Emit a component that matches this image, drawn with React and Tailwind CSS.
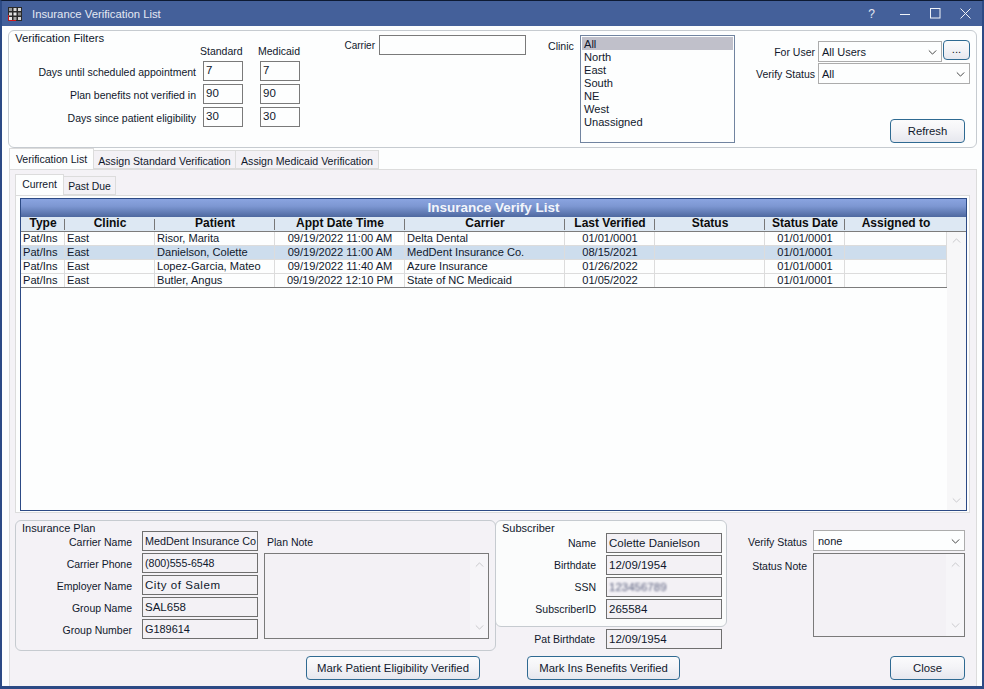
import React from "react";

const font = { fontFamily: '"Liberation Sans", Arial, sans-serif' };

function Chev({ up, color = "#2b2b2b", size = 11 }) {
  return (
    <svg width={size} height={7} viewBox="0 0 11 7" fill="none" className="shrink-0">
      <path d={up ? "M1 6 L5.5 1.5 L10 6" : "M1 1 L5.5 5.5 L10 1"} stroke={color} strokeWidth="1.1" />
    </svg>
  );
}

function NumBox({ v, className = "" }) {
  return (
    <div className={"w-[40px] h-[20px] border border-[#7a7a7a] bg-[#fdfefe] pl-[2px] leading-[16px] text-[11.5px] text-[#10182c] " + className}>{v}</div>
  );
}

function Combo({ v, className = "" }) {
  return (
    <div className={"flex items-center justify-between border border-[#acacac] bg-[#fdfefe] pl-[3px] pr-[4px] pt-px text-[11px] text-[#10182c] " + className}>
      <span>{v}</span>
      <Chev size={9} color="#333" />
    </div>
  );
}

function Btn({ children, className = "" }) {
  return (
    <div className={"flex items-center justify-center rounded-[4px] border border-[#2f6a92] bg-[linear-gradient(#fbfbfc_0%,#f4f4f7_45%,#e6e7ee_100%)] text-[#10182c] " + className}>{children}</div>
  );
}

function RO({ v, size = "text-[11.5px]", className = "" }) {
  return (
    <div className={"h-[20px] border border-[#6f6f6f] bg-[#f3f1f5] pl-[2px] pt-px leading-[16px] text-[#10182c] whitespace-nowrap overflow-hidden " + size + " " + className}>{v}</div>
  );
}

function NoteBox({ className = "" }) {
  return (
    <div className={"flex justify-end border border-[#7a7a7a] bg-[#f3f1f5] " + className}>
      <div className="w-[18px] flex flex-col items-center justify-between py-[7px] bg-[#f6f5f8]">
        <Chev up color="#c5c5c8" size={9} />
        <Chev color="#c5c5c8" size={9} />
      </div>
    </div>
  );
}

const cols = [
  ["Type", 44, "l"],
  ["Clinic", 90, "l"],
  ["Patient", 120, "l"],
  ["Appt Date Time", 130, "c"],
  ["Carrier", 160, "l"],
  ["Last Verified", 90, "c"],
  ["Status", 110, "c"],
  ["Status Date", 80, "c"],
  ["Assigned to", 102, "c"],
];

const rows = [
  ["Pat/Ins", "East", "Risor, Marita", "09/19/2022 11:00 AM", "Delta Dental", "01/01/0001", "", "01/01/0001", ""],
  ["Pat/Ins", "East", "Danielson, Colette", "09/19/2022 11:00 AM", "MedDent Insurance Co.", "08/15/2021", "", "01/01/0001", ""],
  ["Pat/Ins", "East", "Lopez-Garcia, Mateo", "09/19/2022 11:40 AM", "Azure Insurance", "01/26/2022", "", "01/01/0001", ""],
  ["Pat/Ins", "East", "Butler, Angus", "09/19/2022 12:10 PM", "State of NC Medicaid", "01/05/2022", "", "01/01/0001", ""],
];

function Lbl({ children, className = "" }) {
  return <div className={"text-right text-[10.5px] text-[#10182c] whitespace-nowrap " + className}>{children}</div>;
}

export default function App() {
  const clinics = ["All", "North", "East", "South", "NE", "West", "Unassigned"];
  return (
    <div style={font} className="w-[984px] h-[689px] overflow-hidden flex flex-col bg-[#44609a] text-[11.3px] border-x-[2px] border-b-[3px] border-[#2c4a85] border-t border-t-[#0d1a33] text-[#10182c]">
      {/* title bar */}
      <div className="h-[25px] shrink-0 flex items-center text-[#e4e9f3] pl-[6px]">
        <svg width="14" height="14" viewBox="0 0 14 14" className="shrink-0">
          <rect x="0" y="0" width="14" height="14" fill="#2a2a2a" />
          <rect x="1" y="1" width="3" height="3" fill="#9a9a9a" />
          <rect x="5.5" y="1" width="3" height="3" fill="#d8d8d8" />
          <rect x="10" y="1" width="3" height="3" fill="#d8d8d8" />
          <rect x="1" y="5.5" width="3" height="3" fill="#d8d8d8" />
          <rect x="5.5" y="5.5" width="3" height="3" fill="#e8e8e8" />
          <rect x="10" y="5.5" width="3" height="3" fill="#8a8a8a" />
          <rect x="1" y="10" width="3" height="3" fill="#e8e8e8" />
          <rect x="5.5" y="10" width="3" height="3" fill="#a0a0a0" />
          <rect x="10" y="10" width="3" height="3" fill="#d8d8d8" />
          <path d="M0.5 8 V13.5 H8" stroke="#d01818" fill="none" />
        </svg>
        <span className="ml-[10px] text-[11.3px] pt-px">Insurance Verification List</span>
        <span className="ml-auto text-[12px] mr-[25px] pt-px">?</span>
        <svg width="10" height="10" viewBox="0 0 10 10" className="mr-[20px]"><path d="M0 5.5 H10" stroke="#f0f3f8" /></svg>
        <svg width="11" height="11" viewBox="0 0 11 11" className="mr-[19px]"><rect x="0.5" y="0.5" width="9.5" height="9.5" fill="none" stroke="#f0f3f8" /></svg>
        <svg width="11" height="11" viewBox="0 0 11 11" className="mr-[11px]"><path d="M0.5 0.5 L10.5 10.5 M10.5 0.5 L0.5 10.5" stroke="#f0f3f8" /></svg>
      </div>

      {/* client */}
      <div className="flex-1 min-h-0 bg-[#fdfefe] flex flex-col pt-[4px] pl-[6px] pr-[4px]">
        {/* filters */}
        <div className="relative h-[118px] w-[969px] shrink-0 rounded-md border border-[#c6cbd0] flex">
          <div className="absolute left-[6px] top-0 leading-[14px]">Verification Filters</div>
          <div className="w-[293px] pt-[13px] shrink-0">
            <div className="flex pl-[191px] gap-[16px] leading-[14px] text-[10.5px]">
              <span className="w-[42px] whitespace-nowrap text-center">Standard</span>
              <span className="w-[42px] whitespace-nowrap text-center">Medicaid</span>
            </div>
            <div className="mt-[3px] flex flex-col gap-[3px]">
              {[["Days until scheduled appointment", 7], ["Plan benefits not verified in", 90], ["Days since patient eligibility", 30]].map(([l, v]) => (
                <div key={l} className="flex items-center">
                  <Lbl className="w-[187px] mr-[7px] pt-[3px]">{l}</Lbl>
                  <NumBox v={v} />
                  <NumBox v={v} className="ml-[17px]" />
                </div>
              ))}
            </div>
          </div>
          <div className="w-[73px] pt-[8px] text-right shrink-0 leading-[14px] text-[10px]">Carrier</div>
          <div className="ml-[4px] mt-[4px] w-[147px] h-[20px] border border-[#7a7a7a] bg-[#fdfefe] shrink-0" />
          <div className="ml-[22px] w-[26px] pt-[8px] leading-[14px] shrink-0 text-[10.6px]">Clinic</div>
          <div className="ml-[6px] mt-[4px] w-[155px] h-[108px] shrink-0 border border-[#7184a0] bg-[#fdfefe] pt-[1px] px-[1px] text-[11.1px]">
            {clinics.map((c, i) => (
              <div key={c} className={"h-[13px] leading-[14px] pl-[2px] " + (i === 0 ? "bg-[#c0c0ca]" : "")}>{c}</div>
            ))}
          </div>
          <div className="flex-1 relative flex flex-col items-end pr-[6px] pt-[10px]">
            <div className="flex items-start">
              <Lbl className="mr-[3px] mt-[4px]">For User</Lbl>
              <Combo v="All Users" className="w-[124px] h-[21px]" />
              <Btn className="ml-[1px] w-[27px] h-[20px] pb-[2px] -mt-px">...</Btn>
            </div>
            <div className="flex items-start mt-[1px]">
              <Lbl className="mr-[3px] mt-[4px]">Verify Status</Lbl>
              <Combo v="All" className="w-[152px] h-[21px]" />
            </div>
            <Btn className="w-[75px] h-[24px] mt-[35px] mr-[5px] text-[11.3px]">Refresh</Btn>
          </div>
        </div>

        {/* tabs */}
        <div className="flex h-[21px] shrink-0 items-end ml-[1px] relative z-10 text-[10.6px]">
          <div className="w-[85px] h-[21px] bg-[#fdfefe] border border-b-0 border-[#dcdcdc] text-center leading-[20px] whitespace-nowrap">Verification List</div>
          <div className="w-[142px] h-[19px] bg-[#f3f1f5] border border-l-0 border-[#dcdcdc] text-center leading-[21px] whitespace-nowrap">Assign Standard Verification</div>
          <div className="w-[143px] h-[19px] bg-[#f3f1f5] border border-l-0 border-[#dcdcdc] text-center leading-[21px] whitespace-nowrap">Assign Medicaid Verification</div>
        </div>

        {/* panel */}
        <div className="flex-1 min-h-0 ml-[1px] w-[968px] bg-[#f4f2f6] border border-[#dcdcdc] border-b-0 pl-[5px] pr-[6px] pt-[4px] flex flex-col">
          {/* sub tabs */}
          <div className="flex h-[21px] shrink-0 items-end relative z-10 text-[10.4px]">
            <div className="w-[49px] h-[21px] bg-[#fdfefe] border border-b-0 border-[#dcdcdc] text-center leading-[20px]">Current</div>
            <div className="w-[52px] h-[19px] bg-[#f3f1f5] border border-l-0 border-[#dcdcdc] text-center leading-[19px]">Past Due</div>
          </div>
          <div className="h-[318px] w-[955px] shrink-0 border border-[#dcdcdc] bg-[#fdfefe] pl-[4px] pt-[2px]">
            <div className="w-[947px] h-[313px] border border-[#2c4a85] flex flex-col bg-[#fdfefe]">
              <div className="h-[18px] shrink-0 bg-[linear-gradient(#8aa4e0,#7d97d2_40%,#4d689f)] text-[#f2f5fb] font-bold text-[13.5px] text-center leading-[18px]">Insurance Verify List</div>
              <div className="h-[15px] shrink-0 flex bg-[#dde8f3] border-b border-[#7c7c7c] font-bold text-[#0c0c0c] text-[12px] leading-[13px]">
                {cols.map(([h, w], i) => (
                  <div key={h} style={{ width: w }} className="text-center whitespace-nowrap relative shrink-0">
                    {h}
                    {i < cols.length - 1 && <span className="absolute right-0 top-[2px] h-[11px] w-px bg-[#777]" />}
                  </div>
                ))}
              </div>
              <div className="flex flex-1 min-h-0 text-[11.1px]">
                <div className="w-[926px] shrink-0">
                  {rows.map((r, ri) => (
                    <div key={ri} className={"h-[14px] flex border-b " + (ri === 3 ? "border-[#7c7c7c] " : "border-[#dcdcdc] ") + (ri === 1 ? "bg-[#cddded]" : "")}>
                      {r.map((c, i) => (
                        <div key={i} style={{ width: cols[i][1] }} className={"shrink-0 leading-[13px] whitespace-nowrap border-r border-[#dcdcdc] text-[#10182c] " + (cols[i][2] === "c" ? "text-center pl-px" : "pl-[2px]")}>{c}</div>
                      ))}
                    </div>
                  ))}
                </div>
                <div className="flex-1 flex flex-col items-center justify-between pt-[5px] pb-[6px] bg-[#f7f7f8]">
                  <Chev up color="#c5c5c8" size={9} />
                  <Chev color="#c5c5c8" size={9} />
                </div>
              </div>
            </div>
          </div>

          {/* bottom */}
          <div className="flex mt-[7px] shrink-0 h-[131px]">
            <div className="relative w-[481px] h-[131px] rounded-md border border-[#c6cbd0] shrink-0">
              <div className="absolute left-[6px] top-0 leading-[14px] text-[11px]">Insurance Plan</div>
              <div className="flex pt-[10px]">
                <div className="flex flex-col gap-[2px]">
                  {[["Carrier Name", "MedDent Insurance Co", "text-[10.8px]"], ["Carrier Phone", "(800)555-6548", "text-[10.6px]"], ["Employer Name", "City of Salem", "text-[11.5px] tracking-[0.55px]"], ["Group Name", "SAL658", "text-[11.5px]"], ["Group Number", "G189614", "text-[10.9px]"]].map(([l, v, s]) => (
                    <div key={l} className="flex items-center">
                      <Lbl className="w-[116px] mr-[10px] pt-[3px]">{l}</Lbl>
                      <RO v={v} size={s} className="w-[116px]" />
                    </div>
                  ))}
                </div>
                <div className="ml-[6px] w-[225px]">
                  <div className="h-[22px] pl-[3px] leading-[23px] text-[10.5px]">Plan Note</div>
                  <NoteBox className="h-[86px]" />
                </div>
              </div>
            </div>
            <div className="w-[232px] ml-[-1px] shrink-0">
              <div className="relative w-[232px] h-[107px] rounded-md border border-[#c6cbd0] bg-[#fbfcfc]">
                <div className="absolute left-[6px] top-0 leading-[14px] text-[11px]">Subscriber</div>
                <div className="pt-[12px] flex flex-col gap-[2px]">
                  {[["Name", "Colette Danielson"], ["Birthdate", "12/09/1954"], ["SSN", <span className="inline-block blur-[1.2px] text-[#555b7a]">123456789</span>], ["SubscriberID", "265584"]].map(([l, v]) => (
                    <div key={l} className="flex items-center">
                      <Lbl className="w-[100px] mr-[10px] pt-[2px]">{l}</Lbl>
                      <RO v={v} className="w-[116px]" />
                    </div>
                  ))}
                </div>
              </div>
              <div className="flex items-center mt-[2px]">
                <Lbl className="w-[100px] mr-[11px] pt-[2px]">Pat Birthdate</Lbl>
                <RO v="12/09/1954" className="w-[116px]" />
              </div>
            </div>
            <div className="ml-[20px] w-[218px] shrink-0 pt-[10px]">
              <div className="flex items-center">
                <Lbl className="w-[60px] mr-[6px] pt-[4px]">Verify Status</Lbl>
                <Combo v="none" className="w-[152px] h-[21px] pl-[4px]" />
              </div>
              <div className="flex items-start mt-[2px]">
                <Lbl className="w-[60px] mr-[6px] mt-[6px]">Status Note</Lbl>
                <NoteBox className="w-[152px] h-[84px]" />
              </div>
            </div>
          </div>

          {/* buttons */}
          <div className="flex mt-[5px] shrink-0 text-[11.35px]">
            <Btn className="ml-[291px] w-[174px] h-[24px] pt-px">Mark Patient Eligibility Verified</Btn>
            <Btn className="ml-[47px] w-[153px] h-[24px] pt-px">Mark Ins Benefits Verified</Btn>
            <Btn className="ml-[210px] w-[75px] h-[24px] pt-px">Close</Btn>
          </div>
        </div>
      </div>
    </div>
  );
}
